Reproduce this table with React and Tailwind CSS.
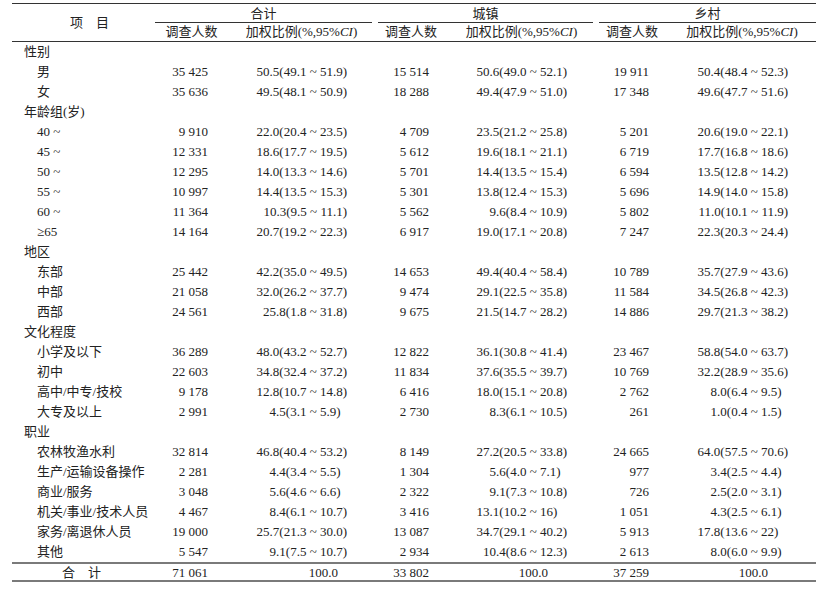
import React from "react";

const groups = [
  {
    title: "性别",
    rows: [
      ["男", "35 425", "50.5(49.1 ~ 51.9)", "15 514", "50.6(49.0 ~ 52.1)", "19 911", "50.4(48.4 ~ 52.3)"],
      ["女", "35 636", "49.5(48.1 ~ 50.9)", "18 288", "49.4(47.9 ~ 51.0)", "17 348", "49.6(47.7 ~ 51.6)"],
    ],
  },
  {
    title: "年龄组(岁)",
    rows: [
      ["40 ~", "9 910", "22.0(20.4 ~ 23.5)", "4 709", "23.5(21.2 ~ 25.8)", "5 201", "20.6(19.0 ~ 22.1)"],
      ["45 ~", "12 331", "18.6(17.7 ~ 19.5)", "5 612", "19.6(18.1 ~ 21.1)", "6 719", "17.7(16.8 ~ 18.6)"],
      ["50 ~", "12 295", "14.0(13.3 ~ 14.6)", "5 701", "14.4(13.5 ~ 15.4)", "6 594", "13.5(12.8 ~ 14.2)"],
      ["55 ~", "10 997", "14.4(13.5 ~ 15.3)", "5 301", "13.8(12.4 ~ 15.3)", "5 696", "14.9(14.0 ~ 15.8)"],
      ["60 ~", "11 364", "10.3(9.5 ~ 11.1)", "5 562", "9.6(8.4 ~ 10.9)", "5 802", "11.0(10.1 ~ 11.9)"],
      ["≥65", "14 164", "20.7(19.2 ~ 22.3)", "6 917", "19.0(17.1 ~ 20.8)", "7 247", "22.3(20.3 ~ 24.4)"],
    ],
  },
  {
    title: "地区",
    rows: [
      ["东部", "25 442", "42.2(35.0 ~ 49.5)", "14 653", "49.4(40.4 ~ 58.4)", "10 789", "35.7(27.9 ~ 43.6)"],
      ["中部", "21 058", "32.0(26.2 ~ 37.7)", "9 474", "29.1(22.5 ~ 35.8)", "11 584", "34.5(26.8 ~ 42.3)"],
      ["西部", "24 561", "25.8(1.8 ~ 31.8)", "9 675", "21.5(14.7 ~ 28.2)", "14 886", "29.7(21.3 ~ 38.2)"],
    ],
  },
  {
    title: "文化程度",
    rows: [
      ["小学及以下", "36 289", "48.0(43.2 ~ 52.7)", "12 822", "36.1(30.8 ~ 41.4)", "23 467", "58.8(54.0 ~ 63.7)"],
      ["初中", "22 603", "34.8(32.4 ~ 37.2)", "11 834", "37.6(35.5 ~ 39.7)", "10 769", "32.2(28.9 ~ 35.6)"],
      ["高中/中专/技校", "9 178", "12.8(10.7 ~ 14.8)", "6 416", "18.0(15.1 ~ 20.8)", "2 762", "8.0(6.4 ~ 9.5)"],
      ["大专及以上", "2 991", "4.5(3.1 ~ 5.9)", "2 730", "8.3(6.1 ~ 10.5)", "261", "1.0(0.4 ~ 1.5)"],
    ],
  },
  {
    title: "职业",
    rows: [
      ["农林牧渔水利", "32 814", "46.8(40.4 ~ 53.2)", "8 149", "27.2(20.5 ~ 33.8)", "24 665", "64.0(57.5 ~ 70.6)"],
      ["生产/运输设备操作", "2 281", "4.4(3.4 ~ 5.5)", "1 304", "5.6(4.0 ~ 7.1)", "977", "3.4(2.5 ~ 4.4)"],
      ["商业/服务", "3 048", "5.6(4.6 ~ 6.6)", "2 322", "9.1(7.3 ~ 10.8)", "726", "2.5(2.0 ~ 3.1)"],
      ["机关/事业/技术人员", "4 467", "8.4(6.1 ~ 10.7)", "3 416", "13.1(10.2 ~ 16)", "1 051", "4.3(2.5 ~ 6.1)"],
      ["家务/离退休人员", "19 000", "25.7(21.3 ~ 30.0)", "13 087", "34.7(29.1 ~ 40.2)", "5 913", "17.8(13.6 ~ 22)"],
      ["其他", "5 547", "9.1(7.5 ~ 10.7)", "2 934", "10.4(8.6 ~ 12.3)", "2 613", "8.0(6.0 ~ 9.9)"],
    ],
  },
];

const cols = "grid grid-cols-[143px_73px_147px_72px_149px_72px_148px]";

// upper bound padded to "00.0" width so the values line up like the print
const Val = ({ v }) => {
  const up = v.match(/~ ([\d.]+)\)/)[1];
  let pad = "";
  if (!up.includes(".")) pad = ".0";
  else if (parseFloat(up) < 10) pad = "0";
  return (
    <span>
      {v}
      {pad && <span className="invisible">{pad}</span>}
    </span>
  );
};

const DataRow = ({ r }) => (
  <div className={`${cols} h-[20px] leading-[20px]`}>
    <div className="pl-[25px] whitespace-nowrap">{r[0]}</div>
    <div className="text-right pr-[20px]">{r[1]}</div>
    <div className="text-right pr-[28px]"><Val v={r[2]} /></div>
    <div className="text-right pr-[18px]">{r[3]}</div>
    <div className="text-right pr-[29px]"><Val v={r[4]} /></div>
    <div className="text-right pr-[19px]">{r[5]}</div>
    <div className="text-right pr-[28px]"><Val v={r[6]} /></div>
  </div>
);

const SubHead = () => (
  <>
    <div className="text-center">调查人数</div>
    <div className="text-center">
      加权比例(%,95%<i>CI</i>)
    </div>
  </>
);

export default function App() {
  return (
    <div className="min-h-screen bg-white pt-[3px] pl-[12px] text-[13px] text-[#222] font-['Liberation_Serif','Noto_Sans_CJK_SC',serif]">
      <div className="w-[804px] border-t border-[#333]">
        <div className={`${cols} border-b border-[#333]`}>
          <div className="row-span-2 flex items-center pl-[58px]">项　目</div>
          <div className="col-span-2 mr-[3px] h-[19px] leading-[19px] text-center border-b border-[#333]">合计</div>
          <div className="col-span-2 mx-[3px] h-[19px] leading-[19px] text-center border-b border-[#333]">城镇</div>
          <div className="col-span-2 ml-[3px] h-[19px] leading-[19px] text-center border-b border-[#333]">乡村</div>
          <div className="col-span-6 grid grid-cols-[73px_147px_72px_149px_72px_148px] h-[18px] leading-[18px]">
            <SubHead />
            <SubHead />
            <SubHead />
          </div>
        </div>

        {groups.map((g) => (
          <div key={g.title}>
            <div className="h-[20px] leading-[20px] pl-[12px]">{g.title}</div>
            {g.rows.map((r) => (
              <DataRow key={r[0]} r={r} />
            ))}
          </div>
        ))}

        <div className={`${cols} h-[20px] leading-[18px] border-t-2 border-b-2 border-[#7a7a7a]`}>
          <div className="pl-[50px]">合　计</div>
          <div className="text-right pr-[20px]">71 061</div>
          <div className="text-right pr-[37px]">100.0</div>
          <div className="text-right pr-[18px]">33 802</div>
          <div className="text-right pr-[48px]">100.0</div>
          <div className="text-right pr-[19px]">37 259</div>
          <div className="text-right pr-[48px]">100.0</div>
        </div>
      </div>
    </div>
  );
}
